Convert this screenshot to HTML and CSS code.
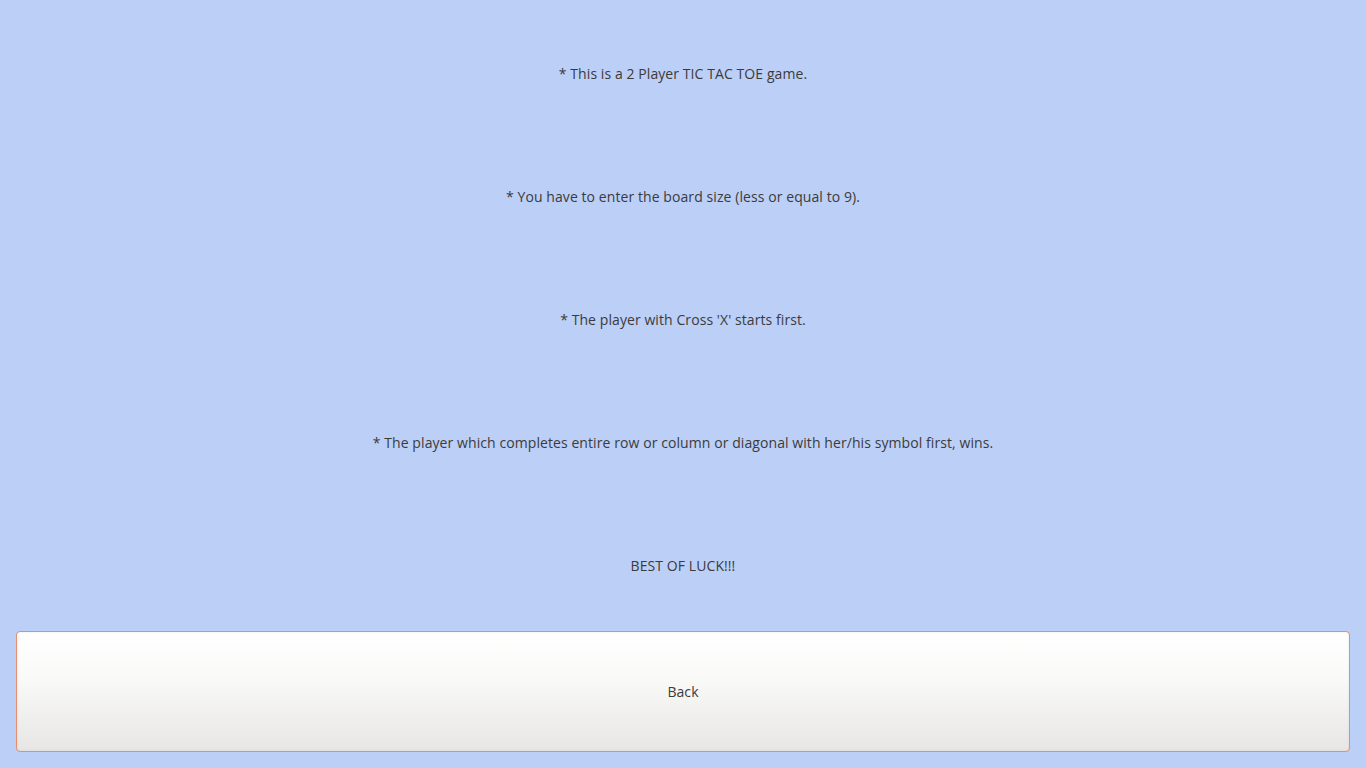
FILE: index.html
```html
<!DOCTYPE html>
<html>
<head>
<meta charset="utf-8">
<link rel="stylesheet" href="styles.css">
</head>
<body>
<div class="app">
  <div class="line">* This is a 2 Player TIC TAC TOE game.</div>
  <div class="line">* You have to enter the board size (less or equal to 9).</div>
  <div class="line">* The player with Cross 'X' starts first.</div>
  <div class="line">* The player which completes entire row or column or diagonal with her/his symbol first, wins.</div>
  <div class="line">BEST OF LUCK!!!</div>
  <button class="back">Back</button>
</div>
</body>
</html>
```

FILE: styles.css
```css
html, body {
  margin: 0;
  padding: 0;
  background: #bccff7;
}
.app {
  box-sizing: border-box;
  height: 768px;
  padding: 12px 16px 17px 16px;
  display: grid;
  grid-template-rows: repeat(5, 123px) 120px;
  font-family: "Open Sans", sans-serif;
  font-size: 14px;
  letter-spacing: 0.08px;
  color: #3b3b3b;
}
.line {
  display: flex;
  align-items: center;
  justify-content: center;
}
.back {
  margin-top: 4px;
  box-sizing: border-box;
  height: 121px;
  border: 1px solid #e58f6f;
  border-radius: 4px;
  background: linear-gradient(to bottom, #ffffff 0%, #f9f9f8 40%, #e7e6e4 100%);
  box-shadow: inset 0 0 3px rgba(0,0,0,0.07);
  font-family: "Open Sans", sans-serif;
  font-size: 14px;
  letter-spacing: 0.08px;
  color: #3b3b3b;
  padding-bottom: 2px;
  cursor: pointer;
}
```
